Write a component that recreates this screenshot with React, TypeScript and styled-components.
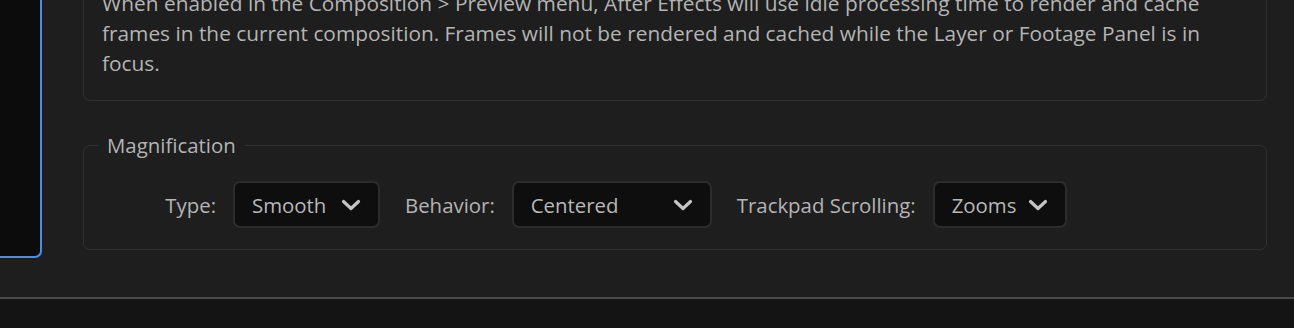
import React from "react";
import styled, { createGlobalStyle } from "styled-components";

const GlobalStyle = createGlobalStyle`
  html, body {
    margin: 0;
    padding: 0;
    background: #1e1e1e;
    overflow: hidden;
  }
  body {
    font-family: "Open Sans", "Liberation Sans", sans-serif;
    color: #b4b4b4;
  }
`;

const Page = styled.div`
  width: 1294px;
  height: 328px;
  display: flex;
  flex-direction: column;
  overflow: hidden;
`;

const Body = styled.div`
  flex: 1;
  display: flex;
  align-items: flex-start;
  margin-top: -32px;
`;

const SidePanel = styled.div`
  flex: none;
  width: 40px;
  height: 288px;
  background: #0c0c0c;
  border-right: 2px solid #4a90e2;
  border-bottom: 2px solid #4a90e2;
  border-bottom-right-radius: 7px;
`;

const Content = styled.div`
  flex: 1;
  display: flex;
  flex-direction: column;
  gap: 29px;
  padding: 0 27px 0 41px;
`;

const Group = styled.fieldset<{ $pad: string }>`
  margin: 0;
  border: 1px solid #303030;
  border-radius: 7px;
  padding: ${({ $pad }) => $pad};
  min-width: 0;
`;

const Legend = styled.legend`
  padding: 0 9px;
  font-size: 20.4px;
  line-height: 30px;
  color: #b4b4b4;
`;

const Note = styled.p`
  margin: 0;
  font-size: 20.85px;
  line-height: 30px;
`;

const Row = styled.div`
  display: flex;
  align-items: center;
  padding: 21px 0 21px;
`;

const Label = styled.span<{ $width?: number }>`
  font-size: 20.4px;
  line-height: 30px;
  white-space: nowrap;
  text-align: right;
  width: ${({ $width }) => ($width ? `${$width}px` : "auto")};
  margin-right: 17px;
  margin-left: ${({ $width }) => ($width ? "0" : "25px")};
`;

const Select = styled.div<{ $width: number }>`
  box-sizing: border-box;
  width: ${({ $width }) => $width}px;
  height: 47px;
  display: flex;
  align-items: center;
  justify-content: space-between;
  padding: 0 17px 0 17px;
  background: #0e0e0e;
  border: 2px solid #2c2c2c;
  border-radius: 7px;
  font-size: 20.4px;
  color: #b8b8b8;
`;

const Chevron = () => (
  <svg width="20" height="12" viewBox="0 0 20 12" fill="none">
    <path
      d="M2.5 2.5 L10 9.5 L17.5 2.5"
      stroke="#c4c4c4"
      strokeWidth="3.2"
      strokeLinecap="round"
      strokeLinejoin="round"
    />
  </svg>
);

const Footer = styled.div`
  flex: none;
  height: 29px;
  background: #141414;
  border-top: 2px solid #4a4a4a;
`;

const Dropdown = ({ value, width }: { value: string; width: number }) => (
  <Select $width={width}>
    <span>{value}</span>
    <Chevron />
  </Select>
);

export default function App() {
  return (
    <Page>
      <GlobalStyle />
      <Body>
        <SidePanel />
        <Content>
          <Group $pad="19px 44px 22px 18px">
            <Note>
              When enabled in the Composition &gt; Preview menu, After Effects will use idle
              processing time to render and cache frames in the current composition. Frames will
              not be rendered and cached while the Layer or Footage Panel is in focus.
            </Note>
          </Group>
          <Group $pad="0 14px">
            <Legend>Magnification</Legend>
            <Row>
              <Label $width={118}>Type:</Label>
              <Dropdown value="Smooth" width={147} />
              <Label>Behavior:</Label>
              <Dropdown value="Centered" width={200} />
              <Label>Trackpad Scrolling:</Label>
              <Dropdown value="Zooms" width={134} />
            </Row>
          </Group>
        </Content>
      </Body>
      <Footer />
    </Page>
  );
}
